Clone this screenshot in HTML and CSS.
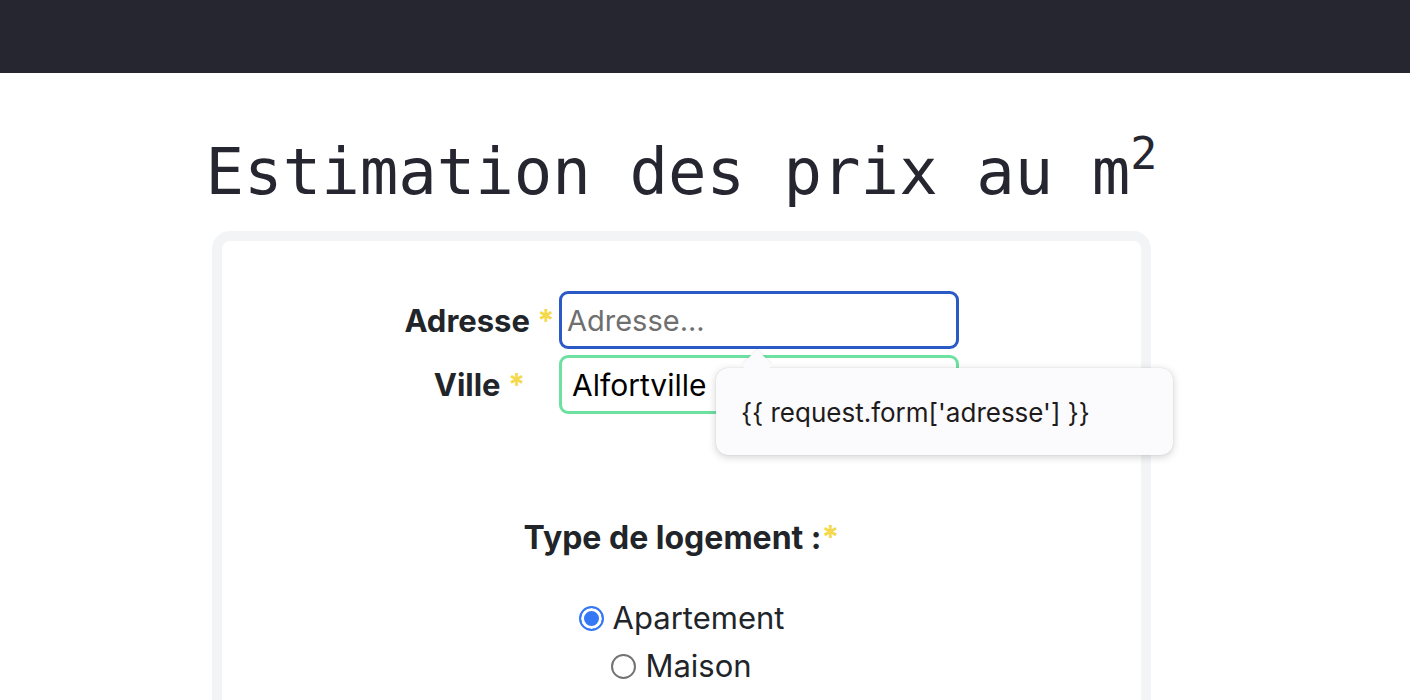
FILE: index.html
```html
<!DOCTYPE html>
<html lang="fr">
<head>
<meta charset="utf-8">
<title>Estimation des prix au m²</title>
<link rel="stylesheet" href="styles.css">
</head>
<body>
<header class="topbar"></header>
<main class="page">
  <h1 class="title">Estimation des prix au m<sup>2</sup></h1>
  <section class="card">
    <form class="form">
      <div class="field-row">
        <label class="field-label" for="adresse">Adresse <span class="req">*</span></label>
        <div class="input-wrap">
          <input id="adresse" class="text-input focused" type="text" placeholder="Adresse...">
          <div class="tooltip">{{ request.form['adresse'] }}</div>
        </div>
      </div>
      <div class="field-row">
        <label class="field-label" for="ville">Ville <span class="req">*</span></label>
        <div class="input-wrap">
          <input id="ville" class="text-input valid" type="text" value="Alfortville">
        </div>
      </div>
      <h2 class="group-title">Type de logement :<span class="req">*</span></h2>
      <div class="radio-list">
        <label class="radio-item"><span class="radio checked"></span>Apartement</label>
        <label class="radio-item"><span class="radio"></span>Maison</label>
      </div>
    </form>
  </section>
</main>
</body>
</html>
```
FILE: styles.css
```css
* { box-sizing: border-box; }
html, body { margin: 0; padding: 0; background: #ffffff; }
body { font-family: Inter, "Noto Sans", sans-serif; color: #212529; }

.topbar { height: 73px; background: #262631; }

.page {
  width: 939px;
  margin-left: 212px;
  display: flex;
  flex-direction: column;
  align-items: stretch;
}

.title {
  align-self: center;
  white-space: nowrap;
  font-family: "DejaVu Sans Mono", monospace;
  font-weight: 400;
  font-size: 64px;
  line-height: 1;
  color: #262631;
  margin: 67px 0 0 0;
  height: 91px;
}
.title sup { font-size: 45px; line-height: 0; vertical-align: 25px; }

.card {
  border: 10px solid #f3f4f6;
  border-radius: 18px;
  background: #fff;
  height: 520px;
  padding-top: 50px;
}

.form { display: flex; flex-direction: column; align-items: center; }

.field-row { display: flex; align-items: center; margin-right: 4px; }
.field-row + .field-row { margin-top: 6px; }

.field-label {
  width: 159px;
  text-align: center;
  font-weight: 700;
  font-size: 31px;
  color: #212529;
}
.req { color: #f5d94a; font-weight: 700; }

.input-wrap { position: relative; }

.text-input {
  width: 400px;
  height: 58px;
  border: 3px solid #2b5ac6;
  border-radius: 9px;
  font-family: Inter, "Noto Sans", sans-serif;
  font-size: 30px;
  padding: 0 8px 0 5px;
  color: #000;
  outline: none;
  background: #fff;
}
.text-input::placeholder { color: #6f6f6f; font-size: 29px; }
.text-input.valid { border-color: #6ee0a0; padding-left: 10px; height: 59px; }

.tooltip {
  position: absolute;
  left: 157px;
  top: 77px;
  width: 457px;
  height: 87px;
  background: #fbfafd;
  border-radius: 12px;
  box-shadow: 0 2px 8px rgba(0,0,0,0.18), 0 0 1px rgba(0,0,0,0.2);
  font-size: 26px;
  line-height: 32px;
  color: #1e1b1b;
  padding: 29px 0 0 25px;
  z-index: 2;
}
.tooltip::before {
  content: "";
  position: absolute;
  left: 30px;
  top: -14px;
  width: 22px;
  height: 22px;
  background: #fbfafd;
  transform: rotate(45deg);
  box-shadow: -1px -1px 2px rgba(0,0,0,0.06);
  border-radius: 3px;
}

.group-title {
  font-size: 32px;
  font-weight: 700;
  margin: 104px 0 0 0;
  color: #212529;
}

.radio-list { display: flex; flex-direction: column; align-items: center; margin-top: 37px; }
.radio-item { display: flex; align-items: center; font-size: 31px; color: #212529; line-height: 48px; }
.radio {
  width: 25px; height: 25px;
  border-radius: 50%;
  border: 2px solid #737373;
  margin-right: 9px;
  background: #fff;
}
.radio.checked {
  border: 2px solid #3478f6;
  background: #3478f6;
  box-shadow: inset 0 0 0 3px #fff;
}
```
